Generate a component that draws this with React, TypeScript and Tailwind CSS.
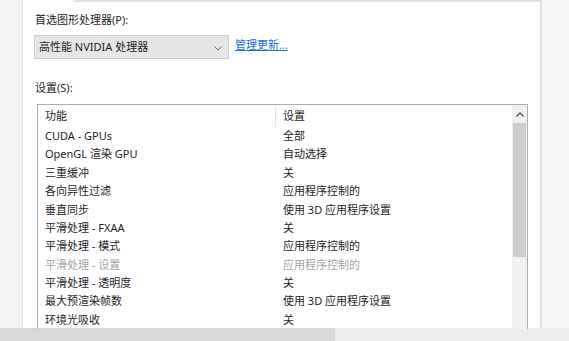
import React from "react";

const rows: { f: string; s: string; dis?: boolean }[] = [
  { f: "CUDA - GPUs", s: "全部" },
  { f: "OpenGL 渲染 GPU", s: "自动选择" },
  { f: "三重缓冲", s: "关" },
  { f: "各向异性过滤", s: "应用程序控制的" },
  { f: "垂直同步", s: "使用 3D 应用程序设置" },
  { f: "平滑处理 - FXAA", s: "关" },
  { f: "平滑处理 - 模式", s: "应用程序控制的" },
  { f: "平滑处理 - 设置", s: "应用程序控制的", dis: true },
  { f: "平滑处理 - 透明度", s: "关" },
  { f: "最大预渲染帧数", s: "使用 3D 应用程序设置" },
  { f: "环境光吸收", s: "关" },
];

export default function App() {
  return (
    <div
      className="w-[569px] h-[341px] overflow-hidden flex flex-col bg-white text-[11px] text-[#1e1e1e]"
      style={{ fontFamily: '"Noto Sans", "Noto Sans CJK SC", sans-serif' }}
    >
      <div className="flex flex-1 min-h-0">
        <div className="w-[23px] bg-[#f3f3f3] border-r border-[#e2e2e2]" />
        <div className="w-[517px] bg-white flex flex-col relative">
          <div className="absolute top-0 left-[50px] right-0 h-[2px] bg-[#e3e3e3]" />
          <div className="pl-[12px] pt-[12px] leading-[16px]">首选图形处理器(P):</div>
          <div className="flex items-center mt-[7px] pl-[11px]">
            <div className="w-[195px] h-[24px] bg-[#e6e6e6] border border-[#cfcfcf] flex items-center pl-[4px] pr-[6px] justify-between">
              <span>高性能 NVIDIA 处理器</span>
              <svg width="8" height="5" viewBox="0 0 8 5" className="mt-[2px]">
                <path d="M0.5 0.5 L4 4 L7.5 0.5" fill="none" stroke="#666" strokeWidth="1" />
              </svg>
            </div>
            <span className="ml-[6px] text-[#1a6fc9] underline -mt-[3px]">管理更新...</span>
          </div>
          <div className="pl-[12px] mt-[21px] leading-[16px]">设置(S):</div>
          <div className="ml-[14px] mt-[8px] w-[491px] flex-1 border border-[#adadad] border-b-0 flex">
            <div className="flex-1 flex flex-col">
              <div className="flex h-[22px] items-center">
                <div className="w-[237px] pl-[7px]">功能</div>
                <div className="w-px h-[21px] bg-[#e5e5e5]" />
                <div className="pl-[7px]">设置</div>
              </div>
              {rows.map((r, i) => (
                <div
                  key={i}
                  className={
                    "flex h-[18.4px] items-center " + (r.dis ? "text-[#a3a3a3]" : "")
                  }
                >
                  <div className="w-[238px] pl-[7px]">{r.f}</div>
                  <div className="pl-[7px]">{r.s}</div>
                </div>
              ))}
            </div>
            <div className="w-[15px] bg-[#f0f0f0] flex flex-col items-center">
              <div className="h-[18px] flex items-center justify-center">
                <svg width="8" height="5" viewBox="0 0 8 5">
                  <path d="M0.5 4.5 L4 1 L7.5 4.5" fill="none" stroke="#555" strokeWidth="1.3" />
                </svg>
              </div>
              <div className="w-[13px] h-[134px] bg-[#cdcdcd]" />
            </div>
          </div>
        </div>
        <div className="w-[2px] bg-[#e0e0e0]" />
        <div className="flex-1 bg-[#f7f7f7]" />
      </div>
      <div className="h-[13px] flex bg-[#ececec]">
        <div className="w-[335px] bg-[#d9d9d9]" />
      </div>
    </div>
  );
}
